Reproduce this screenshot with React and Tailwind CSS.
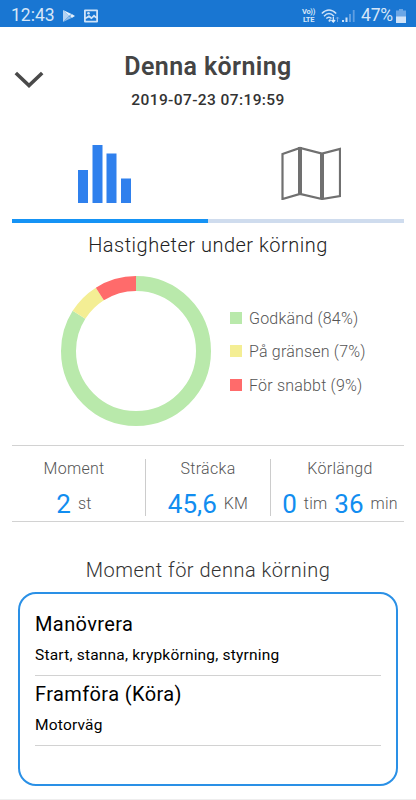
const speeds = [
  { label: 'Godkänd', percent: 84, color: '#b9e9ab' },
  { label: 'På gränsen', percent: 7, color: '#f4ee94' },
  { label: 'För snabbt', percent: 9, color: '#ff6b6b' },
];

const moments = [
  { title: 'Manövrera', details: 'Start, stanna, krypkörning, styrning' },
  { title: 'Framföra (Köra)', details: 'Motorväg' },
];

function StatusBar() {
  return (
    <div className="flex h-[27px] items-center bg-[#1976d2] pt-[4px] pr-[10px] pl-[11px] text-[#d6e6f8]">
      <span className="w-[51px] text-[17.5px] leading-none">12:43</span>
      <svg className="h-[14px] w-[14px]" viewBox="0 0 14 14">
        <path d="M1 1v12l6-6z" fill="#b5d3f3" />
        <path d="M1 1l6 6 2.500-2z" fill="#e4f0fc" />
        <path d="M1 13l6-6 2.500 2z" fill="#8fbdec" />
        <path d="M9.800 5L13 7 9.800 9 8 7z" fill="#e4f0fc" />
      </svg>
      <svg className="ml-[8px] h-[14px] w-[14px]" viewBox="0 0 14 14">
        <path
          d="M1 .5h12q1 0 1 1v11q0 1-1 1H1q-1 0-1-1v-11q0-1 1-1zM1.800 2.300v6L5 6l2.500 2 2.500-2.500 2.200 2V2.300zM1.800 10v1.700h10.400V9.500L10 8l-2.500 2.300L5 8.500z"
          fill="#d0e3f8"
          fillRule="evenodd"
        />
        <circle cx="4.500" cy="4.300" r="1.300" fill="#d0e3f8" />
      </svg>
      <div className="ml-auto flex items-center">
        <div className="w-[15px] text-center text-[7.5px] leading-[9px] font-bold tracking-[-0.3px]">
          <div className="h-[8px]">Vo))</div>
          <div>LTE</div>
        </div>
        <svg className="ml-[5px] h-[16px] w-[19px]" viewBox="0 0 19 16" fill="none">
          <g stroke="#cfe2f8" strokeWidth="1.500">
            <path d="M.8 5.500Q8 -1.500 15.200 5.500" />
            <path d="M3 8.200Q8 3 13 8.200" />
            <path d="M5.300 10.500Q8 7.800 10.500 10.500" />
          </g>
          <path d="M8 13.500l1.500-2" stroke="#cfe2f8" strokeWidth="2" />
          <path d="M12.300 9v5M10.500 12l1.800 2 1.800-2" stroke="#e4f0fc" strokeWidth="1.200" />
          <path d="M16.500 14V9M15 10.700L16.500 9l1.500 1.700" stroke="#75aae5" />
        </svg>
        <svg className="ml-[2px] h-[14px] w-[13px]" viewBox="0 0 13 14">
          <path d="M0 11h2v2H0zM3.500 8.500h2V13h-2z" fill="#cfe2f8" />
          <path d="M7 5h2v8H7zM10.800 1h1.800v12h-1.800z" fill="#5f9ee1" />
        </svg>
        <span className="ml-[6px] w-[32px] text-[17.5px] leading-none tracking-[-0.2px]">47%</span>
        <svg className="ml-[3px] h-[14px] w-[10px]" viewBox="0 0 10 14">
          <path d="M3 0h4v1.500h3V8H0V1.500h3z" fill="#6ba6e5" />
          <path d="M0 7.500h10V14H0z" fill="#d0e3f8" />
        </svg>
      </div>
    </div>
  );
}

function Header() {
  return (
    <header className="relative h-[93px] pt-[25px] text-center">
      <svg className="absolute top-[44px] left-[14px] h-[18px] w-[30px]" viewBox="0 0 30 18">
        <path d="M1.800 2L15 14.500 28.200 2" fill="none" stroke="#4a4a4a" strokeWidth="3.600" />
      </svg>
      <h1 className="text-[25px] leading-[30px] font-semibold tracking-[0.4px] text-[#444]">
        Denna körning
      </h1>
      <p className="mt-[8px] text-[15.5px] leading-[20px] font-medium tracking-[0.4px] text-[#333]">
        2019-07-23 07:19:59
      </p>
    </header>
  );
}

function Tabs() {
  return (
    <nav className="mx-[12px] flex h-[103px]">
      <button className="flex w-1/2 justify-center border-b-4 border-[#1593f5] pt-[24px] pr-[10px]">
        <svg className="h-[60px] w-[54px]" viewBox="0 0 54 60" fill="#2f80ed">
          <path d="M0 26h10v33H0zM14.500 1h10v58h-10zM28.500 9.500h10V59h-10zM43 34.500h10V59H43z" />
        </svg>
      </button>
      <button className="flex w-1/2 justify-center border-b-4 border-[#cfdcee] pt-[26px] pl-[10px]">
        <svg className="h-[54px] w-[60px]" viewBox="0 0 60 54" fill="none" stroke="#707070">
          <path d="M1.500 8L19 2l22 5.500L59 3v47l-18 3-22-5L1.500 53z" strokeWidth="2.200" />
          <path d="M19 1v47.500M41 7v46" strokeWidth="4" />
        </svg>
      </button>
    </nav>
  );
}

function Donut() {
  let start = 0;
  return (
    <svg className="h-[152px] w-[152px] -rotate-90" viewBox="-76 -76 152 152">
      {speeds.map((s) => {
        const offset = -start;
        start += s.percent;
        return (
          <circle
            key={s.label}
            r="67.5"
            fill="none"
            stroke={s.color}
            strokeWidth="15"
            pathLength="100"
            strokeDasharray={`${s.percent} ${100 - s.percent}`}
            strokeDashoffset={offset}
          />
        );
      })}
    </svg>
  );
}

function Value({ children }) {
  return (
    <span className="text-[26px] leading-[30px] font-normal tracking-normal text-[#118df0]">
      {children}
    </span>
  );
}

function Stat({ label, className, children }) {
  return (
    <div className={`flex flex-col items-center ${className}`}>
      <div className="text-[16px] leading-[20px] tracking-[0.3px]">{label}</div>
      <div className="mt-[10px] flex items-center gap-[7px] text-[16px] leading-[20px] tracking-[0.2px] whitespace-nowrap">
        {children}
      </div>
    </div>
  );
}

function App() {
  return (
    <div className="flex h-[800px] w-[416px] flex-col overflow-hidden border-b border-[#eee] bg-white font-['Roboto',sans-serif]">
      <StatusBar />
      <Header />
      <Tabs />

      <section>
        <h2 className="mt-[10px] text-center text-[20px] leading-[24px] font-[350] tracking-[0.5px] text-[#222]">
          Hastigheter under körning
        </h2>
        <div className="mt-[18px] flex pl-[60px]">
          <Donut />
          <ul className="mt-[33.5px] ml-[18px] text-[16px] leading-[20px] font-[350] tracking-[0.2px] text-[#555]">
            {speeds.map((s) => (
              <li key={s.label} className="mb-[13.5px] flex items-center gap-[7px]">
                <span
                  className="relative -top-[1px] h-[12px] w-[12px]"
                  style={{ backgroundColor: s.color }}
                />
                {s.label} ({s.percent}%)
              </li>
            ))}
          </ul>
        </div>
      </section>

      <section className="mx-[12px] mt-[18px] flex h-[77px] border-y border-[#d2d2d2] pt-[13px] pb-[5px] font-[350] text-[#555]">
        <Stat label="Moment" className="w-[134px] border-r border-[#ccc] pr-[9px]">
          <Value>2</Value> st
        </Stat>
        <Stat label="Sträcka" className="w-[125px] border-r border-[#ccc]">
          <Value>45,6</Value> KM
        </Stat>
        <Stat label="Körlängd" className="flex-1 pl-[5px]">
          <Value>0</Value> tim <Value>36</Value> min
        </Stat>
      </section>

      <h2 className="mt-[36px] text-center text-[20px] leading-[24px] font-[350] tracking-[0.5px] text-[#333]">
        Moment för denna körning
      </h2>
      <ul className="mx-[18px] mt-[10px] h-[194px] rounded-[18px] border-2 border-[#2a90e6] px-[15px] pt-[12px] text-black">
        {moments.map((m) => (
          <li key={m.title} className="h-[70px] border-b border-[#d2d2d2] pt-[6px]">
            <h3 className="text-[20px] leading-[24px] tracking-[0.4px]">{m.title}</h3>
            <p className="mt-[9px] text-[15.5px] leading-[20px] tracking-[0.2px]">
              {m.details}
            </p>
          </li>
        ))}
      </ul>
    </div>
  );
}

export default App;
